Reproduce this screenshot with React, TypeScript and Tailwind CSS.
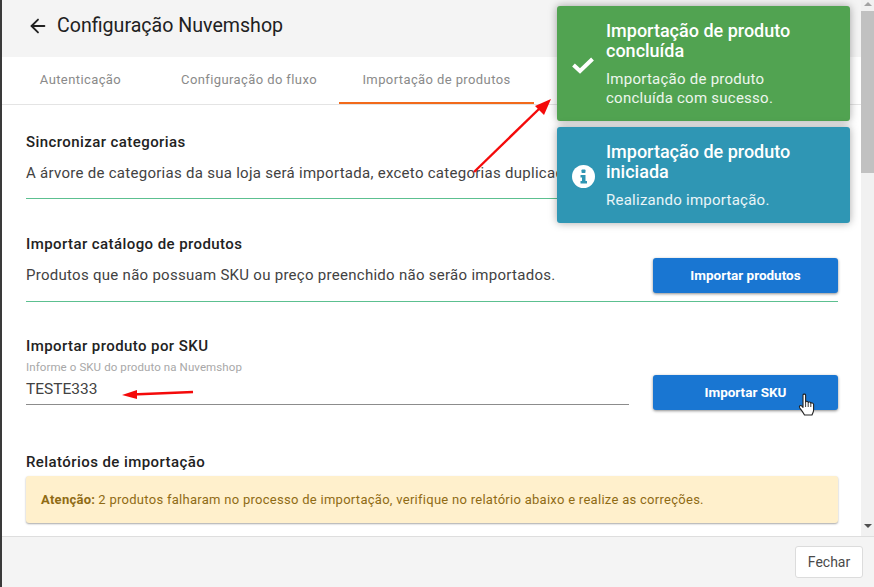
import React from 'react';
import { ArrowLeft } from 'lucide-react';

const FONT = "font-['Roboto',sans-serif]";

const Tab: React.FC<{ label: string; active?: boolean; className: string }> = ({ label, active, className }) => (
  <div
    className={`flex h-[47px] items-center justify-center border-b-2 text-[13px] tracking-[0.4px] text-[#8a8a8a] ${
      active ? 'border-[#f26a1b]' : 'border-transparent'
    } ${className}`}
  >
    {label}
  </div>
);

const PrimaryButton: React.FC<{ label: string }> = ({ label }) => (
  <div className="flex h-[35px] w-[185px] shrink-0 items-center justify-center rounded-[3px] bg-[#1976d2] text-[13.5px] font-bold tracking-normal text-white shadow-[0_1px_3px_rgba(0,0,0,0.45)]">
    {label}
  </div>
);

const SectionTitle: React.FC<{ children: React.ReactNode }> = ({ children }) => (
  <h2 className="text-[15px] font-medium leading-[18px] tracking-[0.42px] text-[#222]">{children}</h2>
);

const Toast: React.FC<{ color: string; icon: React.ReactNode; title: string; message: string }> = ({
  color,
  icon,
  title,
  message,
}) => (
  <div className={`flex w-[293px] items-center rounded-[3px] pb-[13px] pt-[15px] text-white shadow-[0_0_8px_rgba(0,0,0,0.35)] ${color}`}>
    <div className="flex w-[49px] shrink-0 justify-center pl-[3px]">{icon}</div>
    <div className="min-w-0 flex-1 pr-[20px]">
      <div className="text-[18px] font-medium leading-[20px]">{title}</div>
      <div className="mt-[9px] text-[15px] leading-[19px] tracking-[0.25px] text-white/90">{message}</div>
    </div>
  </div>
);

const Arrow: React.FC<{ className: string; width: number; height: number; d: string; head: string }> = ({
  className,
  width,
  height,
  d,
  head,
}) => (
  <svg className={`absolute ${className}`} width={width} height={height} viewBox={`0 0 ${width} ${height}`} fill="none">
    <path d={d} stroke="#f40a0a" strokeWidth="2.4" />
    <polygon points={head} fill="#f40a0a" />
  </svg>
);

export default function App() {
  return (
    <div className={`relative flex h-[587px] w-[874px] flex-col overflow-hidden bg-white pl-[2px] text-[#212121] ${FONT}`}>
      <div className="absolute bottom-0 left-0 top-0 w-[2px] bg-[#3a3a3a]" />

      <div className="flex min-h-0 flex-1">
        <div className="flex min-w-0 flex-1 flex-col overflow-hidden">
          {/* Header */}
          <div className="flex h-[57px] shrink-0 items-center gap-[8px] bg-[#f4f4f4] pb-[6px] pl-[25px]">
            <ArrowLeft size={22} strokeWidth={2} className="text-[#212121]" />
            <span className="text-[19.6px] leading-none text-[#212121]">Configuração Nuvemshop</span>
          </div>

          {/* Tabs */}
          <div className="flex shrink-0 border-b border-[#e4e4e4]">
            <Tab label="Autenticação" className="w-[157px]" />
            <Tab label="Configuração do fluxo" className="w-[180px]" />
            <Tab label="Importação de produtos" active className="w-[195px]" />
          </div>

          {/* Conteúdo */}
          <div className="flex flex-col pl-[24px] pr-[23px] text-[15px] tracking-[0.28px] text-[#424242]">
            <section className="pt-[28px]">
              <SectionTitle>Sincronizar categorias</SectionTitle>
              <div className="flex h-[48px] items-center whitespace-nowrap border-b border-[#5cc090] pb-[3px]">
                A árvore de categorias da sua loja será importada, exceto categorias duplicadas.
              </div>
            </section>

            <section className="pt-[36px]">
              <SectionTitle>Importar catálogo de produtos</SectionTitle>
              <div className="flex h-[49px] items-center justify-between border-b border-[#5cc090] pb-[4px]">
                <span>Produtos que não possuam SKU ou preço preenchido não serão importados.</span>
                <PrimaryButton label="Importar produtos" />
              </div>
            </section>

            <section className="pt-[35px]">
              <SectionTitle>Importar produto por SKU</SectionTitle>
              <div className="flex items-end justify-between">
                <div className="w-[603px]">
                  <div className="mt-[5px] text-[11.5px] leading-[14px] tracking-[0.1px] text-[#a8a8a8]">
                    Informe o SKU do produto na Nuvemshop
                  </div>
                  <div className="mt-[5px] h-[26px] border-b border-[#8c8c8c] text-[15.5px] leading-[20px] tracking-normal text-[#424242]">
                    TESTE333
                  </div>
                </div>
                <div className="-mb-[5px]">
                  <PrimaryButton label="Importar SKU" />
                </div>
              </div>
            </section>

            <section className="pt-[48px]">
              <SectionTitle>Relatórios de importação</SectionTitle>
              <div className="mt-[5px] flex h-[47px] items-center whitespace-nowrap rounded-[3px] bg-[#fff0cc] pl-[15px] text-[13px] tracking-[0.28px] text-[#8f6b14] shadow-[0_1px_2px_rgba(0,0,0,0.35)]">
                <strong className="mr-[3px] font-bold">Atenção:</strong>
                2 produtos falharam no processo de importação, verifique no relatório abaixo e realize as correções.
              </div>
            </section>
          </div>
        </div>

        {/* Barra de rolagem */}
        <div className="flex w-[13px] shrink-0 flex-col items-center bg-[#f1f1f1]">
          <div className="mt-[2px] h-0 w-0 border-x-[4px] border-b-[4px] border-x-transparent border-b-[#a3a3a3]" />
          <div className="mt-[5px] h-[162px] w-full bg-[#c1c1c1]" />
          <div className="mb-[8px] mt-auto h-0 w-0 border-x-[4px] border-t-[4px] border-x-transparent border-t-[#505050]" />
        </div>
      </div>

      {/* Rodapé */}
      <div className="flex h-[51px] shrink-0 items-center justify-end border-t border-[#dedede] bg-[#f4f4f4] pr-[11px]">
        <div className="flex h-[32px] w-[68px] items-center justify-center rounded-[3px] border border-[#dcdcdc] bg-white text-[14px] text-[#4a4a4a]">
          Fechar
        </div>
      </div>

      {/* Notificações */}
      <div className="absolute left-[557px] top-[6px] flex flex-col gap-[6px]">
        <Toast
          color="bg-[#51a351]"
          title="Importação de produto concluída"
          message="Importação de produto concluída com sucesso."
          icon={
            <svg width="24" height="18" viewBox="0 0 24 18" fill="none">
              <path d="M2.5 9 L9 15 L21.5 3" stroke="white" strokeWidth="4" />
            </svg>
          }
        />
        <Toast
          color="bg-[#2f96b4]"
          title="Importação de produto iniciada"
          message="Realizando importação."
          icon={
            <svg width="23" height="23" viewBox="0 0 23 23">
              <circle cx="11.5" cy="11.5" r="11.5" fill="white" />
              <rect x="9.5" y="4.5" width="4" height="3.5" rx="0.8" fill="#2f96b4" />
              <path d="M8.5 10 H13.5 V16 H15 V18.5 H8.5 V16 H10 V12.4 H8.5 Z" fill="#2f96b4" />
            </svg>
          }
        />
      </div>

      {/* Setas de anotação */}
      <Arrow
        className="left-[470px] top-[95px]"
        width={84}
        height={80}
        d="M4 77 L70 13"
        head="81,4 74,20 65,11"
      />
      <Arrow
        className="left-[120px] top-[387px]"
        width={76}
        height={14}
        d="M12 7.5 L73 5"
        head="2,8 17,3 17,12"
      />

      {/* Cursor */}
      <svg className="absolute left-[798px] top-[393px]" width="18" height="24" viewBox="0 0 18 24">
        <path
          d="M5 2 C5 0.8 7.6 0.8 7.6 2 V9 C8 8 10 8 10.2 9.5 C10.6 8.6 12.6 8.8 12.8 10.2 C13.2 9.6 15.4 9.8 15.6 11.4 V17 C15.6 19 14.8 20 14 22 H6.5 C5.5 20 3.6 17.5 1.8 15 C0.6 13 2.6 11.8 3.8 13 L5 14.4 Z"
          fill="white"
          stroke="#222"
          strokeWidth="1.1"
          strokeLinejoin="round"
        />
        <path d="M7.6 9 V14 M10.2 9.5 V14 M12.8 10.2 V14" stroke="#222" strokeWidth="0.9" />
      </svg>
    </div>
  );
}
